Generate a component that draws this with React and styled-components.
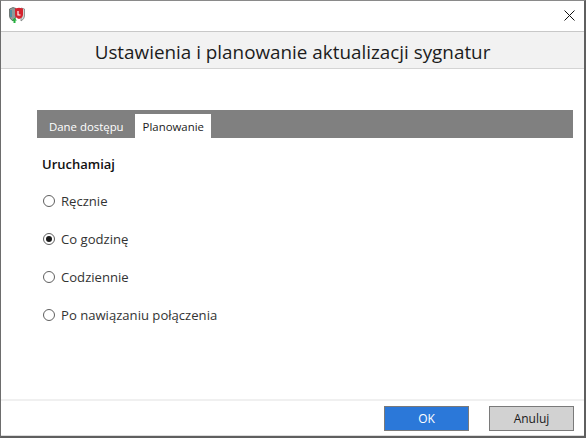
import * as React from "react"
import styled, { createGlobalStyle } from "styled-components"

const Global = createGlobalStyle`
  * {
    box-sizing: border-box;
    margin: 0;
    padding: 0;
  }
  html, body {
    width: 586px;
    height: 438px;
    overflow: hidden;
    background: #fff;
  }
  body {
    font-family: "Open Sans", "Noto Sans", sans-serif;
  }
`

const Window = styled.div`
  display: flex;
  flex-direction: column;
  width: 586px;
  height: 438px;
  border-style: solid;
  border-width: 1px 2px 2px 1px;
  border-color: #8a8a8a #5f5f5f #5f5f5f #6d6d6d;
  background: #fff;
`

const TitleBar = styled.div`
  display: flex;
  align-items: center;
  justify-content: space-between;
  height: 30px;
  padding: 0 9px 2px 8px;
  flex-shrink: 0;
`

const Heading = styled.h1`
  height: 38px;
  flex-shrink: 0;
  background: #f2f2f2;
  border-top: 1px solid #c8c8c8;
  border-bottom: 1px solid #d4d4d4;
  font-size: 18.85px;
  font-weight: 400;
  line-height: 40px;
  text-align: center;
  color: #1c1c1c;
`

const Body = styled.main`
  flex: 1;
  padding: 41px 11px 0 36px;
`

const TabStrip = styled.div`
  display: flex;
  align-items: flex-end;
  gap: 4px;
  height: 28px;
  padding-left: 4px;
  background: #808080;
`

const Tab = styled.div`
  height: 24px;
  padding: 0 7px 0 8px;
  font-size: 11.4px;
  line-height: 26px;
  color: ${({ $active }) => ($active ? "#1a1a1a" : "#fff")};
  background: ${({ $active }) => ($active ? "#fff" : "transparent")};
`

const SectionTitle = styled.h2`
  margin: 17px 0 0 5px;
  font-size: 13px;
  font-weight: 600;
  line-height: 18px;
  color: #111;
`

const RadioList = styled.div`
  display: flex;
  flex-direction: column;
  gap: 20px;
  margin: 19px 0 0 6px;
`

const RadioRow = styled.label`
  display: flex;
  align-items: center;
  gap: 6px;
  height: 18px;
  font-size: 13.1px;
  color: #333;
`

const RadioDot = styled.span`
  display: flex;
  align-items: center;
  justify-content: center;
  width: 12px;
  height: 12px;
  border: 1px solid #5f5f5f;
  border-radius: 50%;
  background: #fff;

  &::after {
    content: "";
    display: ${({ $checked }) => ($checked ? "block" : "none")};
    width: 6px;
    height: 6px;
    border-radius: 50%;
    background: #1a1a1a;
  }
`

const Footer = styled.footer`
  display: flex;
  justify-content: flex-end;
  gap: 20px;
  height: 37px;
  flex-shrink: 0;
  padding: 5px 10px 0 0;
  border-top: 2px solid #f0f0f0;
  border-bottom: 1px solid #dcdcdc;
  background: #fff;
`

const Button = styled.button`
  width: 85px;
  height: 25px;
  border: 1px solid #7a7a7a;
  font-family: inherit;
  font-size: 12px;
  color: ${({ $primary }) => ($primary ? "#fff" : "#1a1a1a")};
  background: ${({ $primary }) => ($primary ? "#2b78d9" : "#d2d2d2")};
`

const CloseSvg = styled.svg`
  margin-top: 1px;
`

const AppIcon = () => (
  <svg width="16" height="16" viewBox="0 0 16 16">
    <path d="M0.5 2 L4 0.5 L7 1.5 V9 Q7 12 4 14 Q0.5 12 0.5 9 Z" fill="#8f9997" stroke="#59625f" strokeWidth="0.8" />
    <path d="M2 3 V10" stroke="#3a8fa3" strokeWidth="1.5" />
    <path d="M12 1 L15.5 2 V9 Q15.5 12 12 14 Z" fill="#d3d6d5" stroke="#7d8382" strokeWidth="0.8" />
    <path d="M6 1.5 L10 0.8 L14 1.5 V7.5 Q14 10.5 10 12 Q6 10.5 6 7.5 Z" fill="#d5232e" />
    <path d="M9 4 V8 H11.5" fill="none" stroke="#fff" strokeWidth="1.2" />
    <path d="M4.5 16 V13.5 H3 L5.5 10.8 L8 13.5 H6.5 V16 Z" fill="#23b13c" />
  </svg>
)

const CloseIcon = () => (
  <CloseSvg width="11" height="11" viewBox="0 0 11 11">
    <path d="M0.5 0.5 L10.5 10.5 M10.5 0.5 L0.5 10.5" stroke="#111" strokeWidth="1" fill="none" />
  </CloseSvg>
)

const options = [
  { label: "Ręcznie" },
  { label: "Co godzinę", checked: true },
  { label: "Codziennie" },
  { label: "Po nawiązaniu połączenia" },
]

export default function App() {
  return (
    <Window>
      <Global />
      <TitleBar>
        <AppIcon />
        <CloseIcon />
      </TitleBar>
      <Heading>Ustawienia i planowanie aktualizacji sygnatur</Heading>
      <Body>
        <TabStrip>
          <Tab>Dane dostępu</Tab>
          <Tab $active>Planowanie</Tab>
        </TabStrip>
        <SectionTitle>Uruchamiaj</SectionTitle>
        <RadioList>
          {options.map((o) => (
            <RadioRow key={o.label}>
              <RadioDot $checked={o.checked} />
              {o.label}
            </RadioRow>
          ))}
        </RadioList>
      </Body>
      <Footer>
        <Button $primary>OK</Button>
        <Button>Anuluj</Button>
      </Footer>
    </Window>
  )
}
